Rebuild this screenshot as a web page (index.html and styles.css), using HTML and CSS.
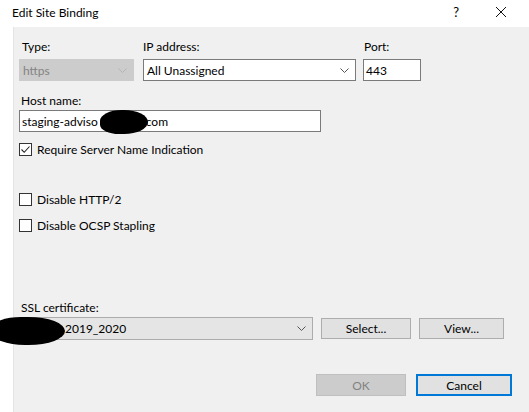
FILE: index.html
```html
<!DOCTYPE html>
<html lang="en">
<head>
    <meta charset="UTF-8">
    <title>Edit Site Binding</title>
    <link rel="stylesheet" href="styles.css">
</head>
<body>
    <div class="dialog">
        <div class="titlebar">
            <span class="title">Edit Site Binding</span>
            <span class="help">?</span>
            <svg class="close" width="12" height="12" viewBox="0 0 12 12">
                <path d="M1 1 L11 11 M11 1 L1 11" stroke="#111" stroke-width="1" fill="none"/>
            </svg>
        </div>

        <div class="panel">
            <!-- type / ip / port -->
            <div class="top-row">
                <div class="field f-type">
                    <span class="label">Type:</span>
                    <div class="combo disabled">
                        <span>https</span>
                        <svg class="chev" width="9" height="5" viewBox="0 0 9 5"><path d="M0.5 0.5 L4.5 4.5 L8.5 0.5" stroke="#b5b5b5" fill="none"/></svg>
                    </div>
                </div>
                <div class="field f-ip">
                    <span class="label">IP address:</span>
                    <div class="combo">
                        <span>All Unassigned</span>
                        <svg class="chev" width="9" height="5" viewBox="0 0 9 5"><path d="M0.5 0.5 L4.5 4.5 L8.5 0.5" stroke="#555" fill="none"/></svg>
                    </div>
                </div>
                <div class="field f-port">
                    <span class="label">Port:</span>
                    <div class="textbox">443</div>
                </div>
            </div>

            <div class="field f-host">
                <span class="label">Host name:</span>
                <div class="textbox">staging-adviso<span class="gap"></span>com</div>
                <div class="blob blob-host"></div>
            </div>

            <label class="check sni">
                <span class="box">
                    <svg width="11" height="11" viewBox="0 0 11 11"><path d="M1.5 5.5 L4.2 8.3 L9.5 2.5" stroke="#222" stroke-width="1.1" fill="none"/></svg>
                </span>
                Require Server Name Indication
            </label>

            <label class="check http2"><span class="box"></span>Disable HTTP/2</label>
            <label class="check ocsp"><span class="box"></span>Disable OCSP Stapling</label>

            <div class="field f-ssl">
                <span class="label">SSL certificate:</span>
                <div class="ssl-row">
                    <div class="combo cert">
                        <span>2019_2020</span>
                        <svg class="chev" width="9" height="5" viewBox="0 0 9 5"><path d="M0.5 0.5 L4.5 4.5 L8.5 0.5" stroke="#555" fill="none"/></svg>
                    </div>
                    <button class="btn btn-select">Select...</button>
                    <button class="btn btn-view">View...</button>
                </div>
            </div>

            <div class="actions">
                <button class="btn btn-ok" disabled>OK</button>
                <button class="btn btn-cancel">Cancel</button>
            </div>
        </div>

        <div class="blob blob-cert"></div>
    </div>
</body>
</html>
```

FILE: styles.css
```css
body {
    margin: 0;
    font-family: Lato, "Liberation Sans", sans-serif;
    font-size: 12px;
    color: #000;
    background: #fff;
}

.dialog {
    position: relative;
    width: 529px;
    height: 412px;
    overflow: hidden;
    background: #fff;
}

.titlebar {
    height: 27px;
    display: flex;
    align-items: center;
    padding-left: 12px;
    padding-bottom: 3px;
    box-sizing: border-box;
}

.title {
    flex: 1;
    font-size: 12px;
}

.help {
    font-size: 13px;
    margin-right: 36px;
}

.close {
    margin-right: 22px;
}

.panel {
    margin-left: 13px;
    height: 385px;
    background: #f0f0f0;
    border-left: 1px solid #e4e4e4;
    box-sizing: border-box;
    padding: 13px 0 0 5px;
}

.field {
    display: flex;
    flex-direction: column;
}

.label {
    height: 14px;
    line-height: 14px;
    margin-bottom: 5px;
    padding-left: 2px;
}

.top-row {
    display: flex;
}

.f-type { width: 115px; }
.f-ip { width: 213px; margin-left: 9px; }
.f-port { width: 58px; margin-left: 7px; }

.f-type .label { padding-left: 3px; }
.f-ip .label { padding-left: 0; }
.f-port .label { padding-left: 1px; }

.combo,
.textbox {
    height: 22px;
    box-sizing: border-box;
    border: 1px solid #7a7a7a;
    background: #fff;
    display: flex;
    align-items: center;
    padding: 0 6px 0 3px;
}

.textbox {
    padding-left: 2px;
}

.combo span {
    flex: 1;
}

.combo.disabled {
    background: #cccccc;
    border-color: #cccccc;
    color: #838383;
}

.f-host {
    margin-top: 13px;
    width: 302px;
    position: relative;
}

.f-host .label {
    margin-bottom: 2px;
}

/* room left for the covered part of the name */
.gap {
    display: inline-block;
    width: 48px;
}

.check {
    display: flex;
    align-items: center;
    height: 14px;
}

.check .box {
    width: 13px;
    height: 13px;
    box-sizing: border-box;
    border: 1px solid #333;
    background: #fff;
    margin-right: 5px;
    display: flex;
    align-items: center;
    justify-content: center;
}

.sni { margin-top: 10px; }
.http2 { margin-top: 36px; }
.ocsp { margin-top: 12px; }

.f-ssl { margin-top: 69px; }

.ssl-row {
    display: flex;
    align-items: center;
    margin-top: -3px;
}

.combo.cert {
    width: 294px;
    height: 23px;
    background: #e5e5e5;
    border-color: #acacac;
    padding-left: 45px;
}

.btn {
    font-family: inherit;
    font-size: 12px;
    color: #000;
    background: #e1e1e1;
    border: 1px solid #adadad;
    height: 21px;
    padding: 0;
    box-sizing: border-box;
}

.btn-select { width: 90px; margin-left: 8px; }
.btn-view { width: 85px; margin-left: 8px; }

.actions {
    display: flex;
    margin-top: 34px;
    padding-left: 297px;
}

.btn-ok,
.btn-cancel {
    height: 22px;
}

.btn-ok {
    width: 90px;
    background: #cccccc;
    border-color: #bfbfbf;
    color: #838383;
}

.btn-cancel {
    width: 96px;
    margin-left: 10px;
    border: 2px solid #0078d7;
}

/* marker blots over the private parts of the names */
.blob {
    position: absolute;
    background: #000;
}

.blob-host {
    left: 81px;
    top: 16px;
    width: 48px;
    height: 24px;
    border-radius: 45% 50% 50% 40%;
}

.blob-cert {
    left: -8px;
    top: 317px;
    width: 73px;
    height: 28px;
    border-radius: 40% 50% 50% 45%;
}
```
